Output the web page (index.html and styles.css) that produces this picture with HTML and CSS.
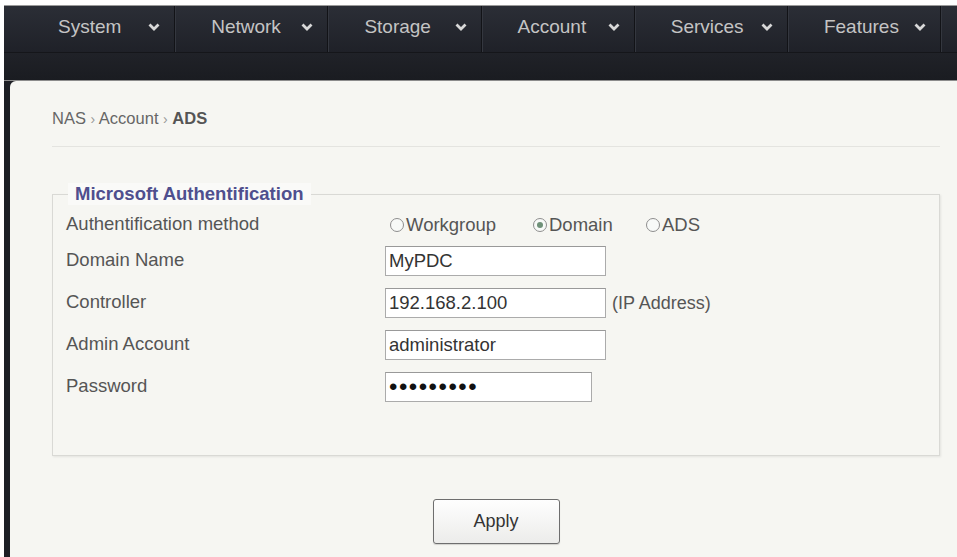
FILE: index.html
```html
<!DOCTYPE html>
<html lang="en">
<head>
  <meta charset="UTF-8" />
  <title>NAS - Account - ADS</title>
  <link rel="stylesheet" href="styles.css">
</head>
<body>
  <div id="frame">
    <ul id="menu">
      <li class="menu-item"><span>System</span><svg class="chev" viewBox="0 0 12 8"><polyline points="1.5,1.5 6,6 10.5,1.5"/></svg></li>
      <li class="menu-item"><span>Network</span><svg class="chev" viewBox="0 0 12 8"><polyline points="1.5,1.5 6,6 10.5,1.5"/></svg></li>
      <li class="menu-item"><span>Storage</span><svg class="chev" viewBox="0 0 12 8"><polyline points="1.5,1.5 6,6 10.5,1.5"/></svg></li>
      <li class="menu-item"><span>Account</span><svg class="chev" viewBox="0 0 12 8"><polyline points="1.5,1.5 6,6 10.5,1.5"/></svg></li>
      <li class="menu-item"><span>Services</span><svg class="chev" viewBox="0 0 12 8"><polyline points="1.5,1.5 6,6 10.5,1.5"/></svg></li>
      <li class="menu-item"><span>Features</span><svg class="chev" viewBox="0 0 12 8"><polyline points="1.5,1.5 6,6 10.5,1.5"/></svg></li>
    </ul>
    <div id="subbar"></div>

    <div id="panel">
      <div id="breadcrumb">NAS <span class="sep">›</span> Account <span class="sep">›</span> <b>ADS</b></div>

      <form id="adsForm" onsubmit="return false">
        <fieldset>
          <legend>Microsoft Authentification</legend>

          <div class="row radio-row">
            <span class="label">Authentification method</span>
            <div class="options">
              <label class="opt wide"><input type="radio" name="auth" value="workgroup">Workgroup</label>
              <label class="opt"><input type="radio" name="auth" value="domain" checked>Domain</label>
              <label class="opt"><input type="radio" name="auth" value="ads">ADS</label>
            </div>
          </div>
          <div class="row">
            <span class="label">Domain Name</span>
            <div class="control"><input type="text" class="field" value="MyPDC"></div>
          </div>
          <div class="row">
            <span class="label">Controller</span>
            <div class="control"><input type="text" class="field" value="192.168.2.100"><span class="hint">(IP Address)</span></div>
          </div>
          <div class="row">
            <span class="label">Admin Account</span>
            <div class="control"><input type="text" class="field" value="administrator"></div>
          </div>
          <div class="row">
            <span class="label">Password</span>
            <div class="control"><input type="password" class="field short" value="secretpwd"></div>
          </div>
        </fieldset>

        <div id="actions">
          <button type="submit" class="apply">Apply</button>
        </div>
      </form>
    </div>
  </div>
</body>
</html>
```

FILE: styles.css
```css
html, body {
  margin: 0;
  height: 100%;
  overflow: hidden;
}

body {
  background-color: #fff;
  font-family: "Liberation Sans", Arial, sans-serif;
  font-size: 18px;
  color: #555;
}

#frame {
  margin: 5px 0 0 4px;
  height: calc(100vh - 5px);
  display: flex;
  flex-direction: column;
  background-color: #1d1f25;
  border-top: 1px solid #9a9a9a;
}

#menu {
  list-style: none;
  margin: 0;
  padding: 0 0 0 18px;
  height: 46px;
  display: flex;
  background: linear-gradient(#2b2e36, #1f2128);
  border-bottom: 1px solid #15161a;
}

.menu-item {
  width: 153.2px;
  flex-shrink: 0;
  display: flex;
  align-items: center;
  justify-content: space-between;
  padding: 0 14px 4px 36px;
  box-sizing: border-box;
  border-right: 1px solid #121317;
  box-shadow: 1px 0 0 #34373f;
  color: #c4c4c4;
  font-size: 19px;
}

.chev {
  width: 12px;
  height: 8px;
  fill: none;
  stroke: #d8d8d8;
  stroke-width: 2.8;
}

#subbar {
  height: 27px;
  background: linear-gradient(#202228, #1a1c21);
  border-bottom: 1px solid #8c8c8c;
}

#panel {
  flex-grow: 1;
  margin-left: 6px;
  padding: 0 17px 0 42px;
  background-color: #f6f6f2;
  border-radius: 6px 0 0 0;
}

#breadcrumb {
  padding: 28px 0 18px;
  font-size: 16.5px;
  line-height: 18px;
  color: #666;
  border-bottom: 1px solid #e4e4e0;
}

#breadcrumb .sep {
  color: #999;
  font-size: 14px;
}

#breadcrumb b {
  color: #555;
}

fieldset {
  margin: 36px 0 0;
  padding: 0 12px 47px 13px;
  border: 1px solid #d9d9d5;
  box-shadow: 1px 1px 2px rgba(0, 0, 0, 0.08);
}

legend {
  margin-left: 2px;
  padding: 0 7px;
  font-size: 18.5px;
  font-weight: bold;
  line-height: 22px;
  color: #4f4f8e;
  background-color: #fafaf8;
}

.row {
  display: grid;
  grid-template-columns: 318px auto;
  align-items: center;
  height: 42px;
}

.row.radio-row {
  height: 35px;
  padding-top: 5px;
  box-sizing: border-box;
}

.label {
  font-size: 18.5px;
  padding-bottom: 3px;
}

.options {
  display: flex;
  align-items: center;
  padding-left: 6px;
}

.opt {
  width: 113px;
  display: flex;
  align-items: center;
  font-size: 18.5px;
}

.opt.wide {
  width: 143px;
}

.opt input {
  appearance: none;
  width: 14px;
  height: 14px;
  margin: 0 2px 0 0;
  border: 1px solid #8e8e8e;
  border-radius: 50%;
  background-color: #f8faf8;
  display: flex;
  align-items: center;
  justify-content: center;
}

.opt input:checked::after {
  content: "";
  width: 6px;
  height: 6px;
  border-radius: 50%;
  background-color: #6f9178;
}

.control {
  display: flex;
  align-items: center;
  padding-left: 1px;
}

.field {
  width: 221px;
  height: 30px;
  box-sizing: border-box;
  padding: 0 3px;
  border: 1px solid #ababab;
  border-top-color: #999;
  background-color: #fff;
  font-family: inherit;
  font-size: 18.5px;
  color: #333;
}

.field.short {
  width: 207px;
}

input[type="password"].field {
  color: #111;
  font-size: 24px;
  letter-spacing: 1.5px;
}

.hint {
  margin-left: 6px;
}

#actions {
  padding-top: 43px;
  text-align: center;
}

.apply {
  width: 127px;
  height: 45px;
  border: 1px solid #6e6e6e;
  border-radius: 3px;
  background: linear-gradient(#fefefe, #ececea);
  box-shadow: 0 1px 1px rgba(0, 0, 0, 0.15);
  font-family: inherit;
  font-size: 18px;
  color: #333;
  cursor: pointer;
}
```
